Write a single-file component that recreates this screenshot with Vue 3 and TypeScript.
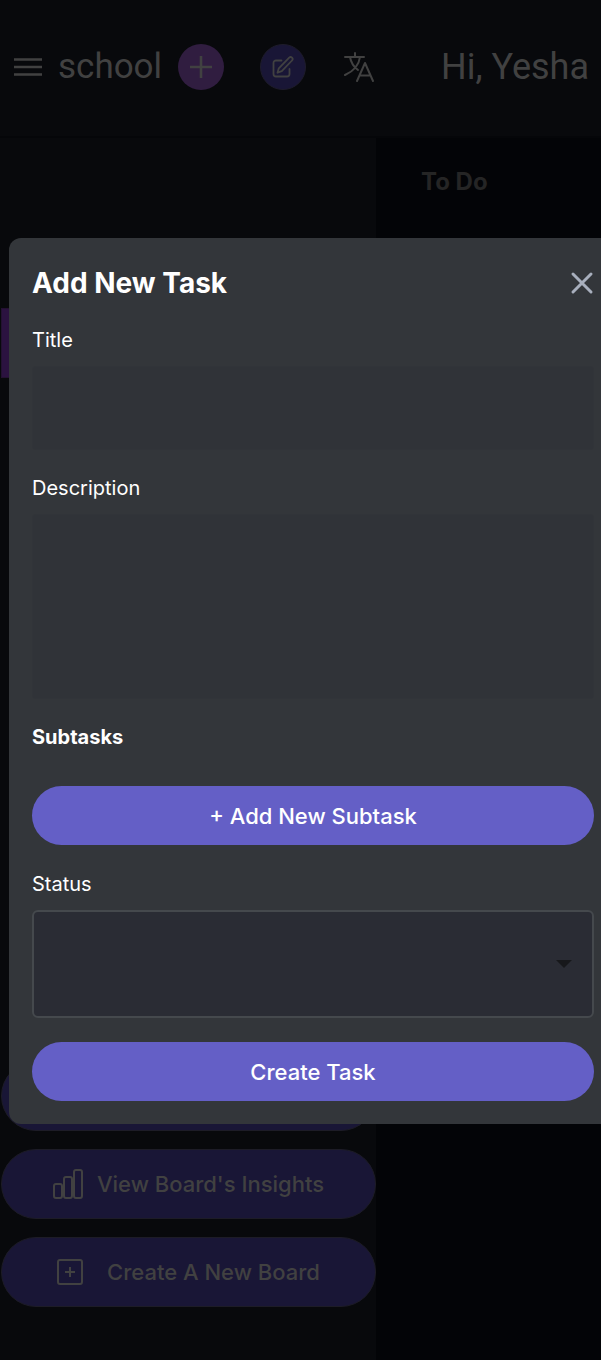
<script setup lang="ts">
import { ref } from 'vue'

const title = ref('')
const description = ref('')
const status = ref('')
</script>

<template>
  <div class="app">
    <header class="topbar">
      <button class="plain" aria-label="Open menu">
        <svg width="28" height="20" viewBox="0 0 28 20"><path d="M0 2.500h28M0 10h28M0 17.500h28" fill="none" stroke="currentColor" stroke-width="2.600" /></svg>
      </button>
      <h1 class="board-name">school</h1>
      <button class="round round-add" aria-label="Add task">
        <svg width="22" height="22" viewBox="0 0 22 22"><path d="M11 0v22M0 11h22" fill="none" stroke="currentColor" stroke-width="2.600" /></svg>
      </button>
      <button class="round round-edit" aria-label="Edit board">
        <svg width="22" height="22" viewBox="0 0 22 22" fill="none" stroke="currentColor" stroke-width="1.800" stroke-linecap="round" stroke-linejoin="round"><path d="M9.500 4.500H4a2.500 2.500 0 0 0-2.500 2.500v11A2.500 2.500 0 0 0 4 20.500h11a2.500 2.500 0 0 0 2.500-2.500v-5" /><path d="M17.200 1.700a1.900 1.900 0 0 1 2.800 2.800L9.800 15.200 5.500 16.700l1.300-4.400z" /></svg>
      </button>
      <button class="plain translate" aria-label="Change language">
        <svg width="30" height="30" viewBox="0 0 30 30" fill="none" stroke="currentColor" stroke-width="2" stroke-linecap="round" stroke-linejoin="round"><path d="M1 5h19M11 1v4M6 5c1 6 4 10 8 13M16 5c-1 8-6 14-15 18M13 29l8-18 8 18M15.500 23.500h11" /></svg>
      </button>
      <p class="greeting">Hi, Yesha</p>
    </header>
    <div class="workspace">
      <aside class="sidebar">
        <a class="board-link" href="#" aria-label="Current board"></a>
        <nav class="actions" aria-label="Board actions">
          <button class="pill" aria-label="Board options"></button>
          <button class="pill">
            <svg width="30" height="30" viewBox="0 0 30 30" fill="none" stroke="currentColor" stroke-width="2"><rect x="1" y="15" width="8" height="14" rx="2" /><rect x="11" y="8" width="8" height="21" rx="2" /><rect x="21" y="1" width="8" height="28" rx="2" /></svg>
            <span>View Board's Insights</span>
          </button>
          <button class="pill create">
            <svg width="26" height="26" viewBox="0 0 26 26" fill="none" stroke="currentColor" stroke-width="2"><rect x="1" y="1" width="24" height="24" rx="2" /><path d="M13 8v10M8 13h10" /></svg>
            <span>Create A New Board</span>
          </button>
        </nav>
      </aside>
      <main class="board"><h2>To Do</h2></main>
    </div>

    <div class="overlay">
      <form class="modal" role="dialog" aria-labelledby="dialog-title" @submit.prevent>
        <div class="modal-head">
          <h2 id="dialog-title">Add New Task</h2>
          <button type="button" class="plain close" aria-label="Close">
            <svg width="24" height="24" viewBox="0 0 24 24"><path d="M3 3l18 18M21 3L3 21" fill="none" stroke="currentColor" stroke-width="3" stroke-linecap="round" /></svg>
          </button>
        </div>
        <div class="field">
          <label for="title">Title</label>
          <input id="title" v-model="title" type="text">
        </div>
        <div class="field">
          <label for="description">Description</label>
          <textarea id="description" v-model="description"></textarea>
        </div>
        <section class="subtasks">
          <h3>Subtasks</h3>
          <button type="button" class="primary">+ Add New Subtask</button>
        </section>
        <div class="field status">
          <label for="status">Status</label>
          <div class="select-wrap">
            <select id="status" v-model="status"><option value=""></option></select>
            <svg class="caret" width="16" height="8" viewBox="0 0 16 8"><path d="M0 0h16L8 8z" fill="#17181b" /></svg>
          </div>
        </div>
        <button type="submit" class="primary">Create Task</button>
      </form>
    </div>
  </div>
</template>

<style>
body {
  margin: 0;
  background: #030407;
}
</style>

<style scoped>
.app {
  position: relative;
  display: flex;
  flex-direction: column;
  min-height: 100vh;
  overflow: hidden;
  color: #414141;
  font-family: Inter, "Liberation Sans", sans-serif;
}

.app * {
  box-sizing: border-box;
}

h1, h2, h3, p {
  margin: 0;
}

button {
  display: flex;
  align-items: center;
  justify-content: center;
  padding: 0;
  border: 0;
  color: inherit;
  font: inherit;
  cursor: pointer;
}

svg {
  display: block;
  flex: none;
}

.plain {
  background: none;
}

.topbar {
  display: flex;
  align-items: center;
  height: 138px;
  padding: 0 12px 2px 14px;
  background: #08090c;
  border-bottom: 2px solid #050609;
}

.board-name, .greeting {
  font: 400 36px/48px Roboto, sans-serif;
  white-space: nowrap;
}

.board-name {
  margin: 0 16px;
  font-size: 35px;
}

.round {
  width: 46px;
  height: 46px;
  border-radius: 50%;
}

.round-add {
  background: #301d40;
}

.round-edit {
  margin-left: 36px;
  background: #191636;
  border: 1px solid #1e1c2b;
}

.translate {
  margin-left: 38px;
}

.greeting {
  margin-left: auto;
}

.workspace {
  display: flex;
  flex: 1;
}

.sidebar {
  display: flex;
  flex-direction: column;
  justify-content: space-between;
  width: 376px;
  padding: 170px 0 53px;
  background: #08090c;
}

.board-link {
  height: 70px;
  margin: 0 1px;
  background: #2b1240;
  border: 1px solid #231131;
}

.actions {
  display: flex;
  flex-direction: column;
  gap: 18px;
}

.pill {
  gap: 14px;
  height: 70px;
  margin: 0 0 0 1px;
  border: 1px solid #1d1c27;
  border-radius: 35px;
  background: #191636;
  font-size: 22px;
  font-weight: 500;
}

.pill.create {
  gap: 24px;
}

.board {
  flex: 1;
  padding: 28px 45px;
}

.board h2 {
  color: #252525;
  font-size: 24px;
  font-weight: 700;
  line-height: 32px;
}

.overlay {
  position: absolute;
  inset: 0 -16px 0 9px;
  display: flex;
  align-items: center;
  padding-top: 2px;
}

.modal {
  flex: 1;
  padding: 24px 23px 23px;
  border-radius: 12px;
  background: #33363a;
  color: #fff;
}

.modal-head {
  display: flex;
  align-items: center;
  justify-content: space-between;
  height: 42px;
  margin-bottom: 24px;
}

.modal-head h2 {
  font-size: 28px;
  font-weight: 700;
}

.close {
  color: #a8afbd;
}

.field {
  display: flex;
  flex-direction: column;
  gap: 14px;
  margin-bottom: 26px;
}

.field label, .subtasks h3 {
  font-size: 20px;
  line-height: 24px;
}

.field input, .field textarea {
  display: block;
  width: 100%;
  height: 84px;
  padding: 16px;
  border: 1px solid #313439;
  border-radius: 4px;
  outline: none;
  background: #303338;
  color: #fff;
  font: 20px/24px Inter, sans-serif;
  resize: none;
}

.field textarea {
  height: 185px;
}

.subtasks {
  margin-bottom: 27px;
}

.subtasks h3 {
  margin-bottom: 37px;
  font-weight: 700;
}

.primary {
  width: 100%;
  height: 59px;
  border-radius: 30px;
  background: #645fc6;
  color: #fff;
  font-size: 22px;
  font-weight: 500;
}

.status {
  margin-bottom: 24px;
}

.select-wrap {
  position: relative;
}

.select-wrap select {
  display: block;
  width: 100%;
  height: 108px;
  padding: 0 48px 0 16px;
  appearance: none;
  border: 2px solid #45494d;
  border-radius: 6px;
  background: #2a2c34;
  color: #fff;
  font: 20px/24px Inter, sans-serif;
}

.caret {
  position: absolute;
  top: 0;
  right: 22px;
  height: 100%;
  pointer-events: none;
}
</style>
